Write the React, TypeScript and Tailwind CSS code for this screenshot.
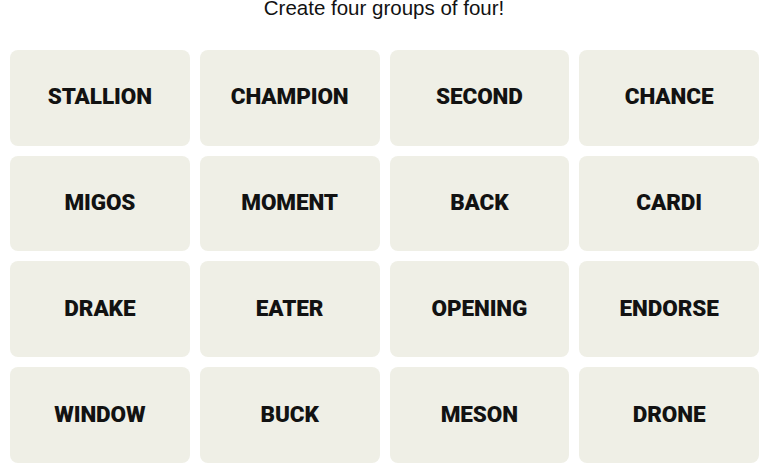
const words = [
  "STALLION", "CHAMPION", "SECOND", "CHANCE",
  "MIGOS", "MOMENT", "BACK", "CARDI",
  "DRAKE", "EATER", "OPENING", "ENDORSE",
  "WINDOW", "BUCK", "MESON", "DRONE",
];

function Tile({ word }: { word: string }) {
  return (
    <div className="flex h-[95.7px] items-center justify-center rounded-lg bg-[#efefe6] pb-[1px] font-['Roboto',Arial,sans-serif] text-[22.5px] font-black tracking-[-0.1px] text-[#121212]">
      {word}
    </div>
  );
}

export default function App() {
  return (
    <div className="w-[768px] h-[466px] overflow-hidden bg-white font-['Liberation_Sans',Arial,sans-serif]">
      <p className="mt-[-2px] text-center text-[20.5px] leading-[20px] text-[#121212]">
        Create four groups of four!
      </p>
      <div className="ml-[10px] mt-[32px] grid w-[749px] grid-cols-4 gap-[10px]">
        {words.map((w) => (
          <Tile key={w} word={w} />
        ))}
      </div>
    </div>
  );
}
